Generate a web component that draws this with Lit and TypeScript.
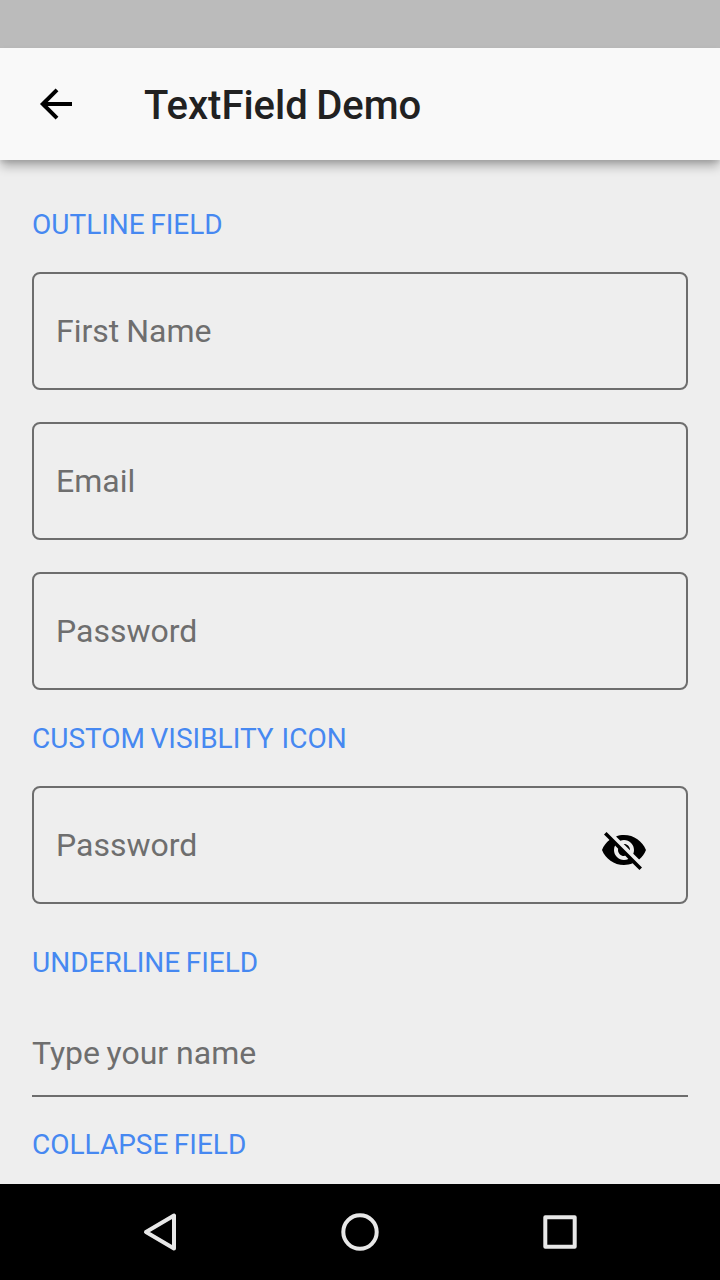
import { LitElement, html, css } from "lit";
import { customElement, property } from "lit/decorators.js";

@customElement("outline-field")
class OutlineField extends LitElement {
  @property() label = "";

  static styles = css`
    :host {
      display: flex;
      box-sizing: border-box;
      height: 118px;
      padding: 0 38px 0 22px;
      border: 2px solid #6d6d6d;
      border-radius: 8px;
      align-items: center;
      justify-content: space-between;
    }
    .label {
      font-size: 32px;
      line-height: 38px;
      color: #6e6e6e;
      white-space: pre;
      word-spacing: -1px;
    }
  `;

  render() {
    return html`<span class="label">${this.label}</span><slot></slot>`;
  }
}

@customElement("app-root")
class AppRoot extends LitElement {
  static styles = css`
    :host {
      display: flex;
      flex-direction: column;
      width: 720px;
      height: 1280px;
      overflow: hidden;
      background: #eeeeee;
      font-family: Roboto, sans-serif;
    }
    .status {
      flex: none;
      height: 48px;
      background: #bbbbbb;
    }
    .bar {
      position: relative;
      z-index: 1;
      flex: none;
      display: flex;
      align-items: center;
      height: 112px;
      padding-left: 32px;
      gap: 64px;
      background: #f9f9f9;
      box-shadow: 0 7px 10px -1px rgba(0, 0, 0, 0.3), 0 3px 3px rgba(0, 0, 0, 0.06);
    }
    .title {
      margin: 4px 0 0;
      font-size: 40px;
      line-height: 48px;
      font-weight: 500;
      color: #212121;
      white-space: pre;
      word-spacing: -1.5px;
    }
    .main {
      flex: 1;
      min-height: 0;
      display: flex;
      flex-direction: column;
      padding: 47px 32px 0;
      overflow: hidden;
    }
    .section {
      flex: none;
      font-size: 28px;
      line-height: 36px;
      color: #4688f1;
      white-space: pre;
      word-spacing: -1.5px;
      margin: 0;
      font-weight: 400;
    }
    .spread {
      word-spacing: 1px;
    }
    .group {
      flex: none;
      display: flex;
      flex-direction: column;
      gap: 32px;
      margin: 29px 0 31px;
    }
    .custom {
      margin-bottom: 41px;
    }
    .underline {
      flex: none;
      box-sizing: border-box;
      height: 116px;
      padding-top: 53px;
      border-bottom: 2px solid #6d6d6d;
      margin-bottom: 30px;
      font-size: 32px;
      line-height: 38px;
      color: #6e6e6e;
      white-space: pre;
    }
    .tight {
      word-spacing: -1.5px;
    }
    .eye {
      margin-top: 10px;
    }
    .nav {
      flex: none;
      display: flex;
      justify-content: center;
      align-items: center;
      gap: 152px;
      height: 96px;
      background: #000;
    }
    svg {
      display: block;
      flex: none;
    }
  `;

  render() {
    return html`
      <div class="status"></div>
      <header class="bar">
        <svg width="48" height="48" viewBox="0 0 48 48" fill="none" stroke="#000" stroke-width="4">
          <path d="M40 24H11M25 9.8 10.8 24 25 38.2" />
        </svg>
        <h1 class="title">TextField Demo</h1>
      </header>
      <main class="main">
        <h2 class="section">OUTLINE FIELD</h2>
        <div class="group">
          <outline-field label="First Name"></outline-field>
          <outline-field label="Email"></outline-field>
          <outline-field label="Password"></outline-field>
        </div>
        <h2 class="section">CUSTOM <span class="spread">VISIBLITY ICON</span></h2>
        <div class="group custom">
          <outline-field label="Password">
            <svg class="eye" width="48" height="48" viewBox="0 0 24 24">
              <path
                d="M12 7c2.76 0 5 2.24 5 5 0 .65-.13 1.26-.36 1.83l2.92 2.92c1.51-1.26 2.7-2.89 3.43-4.75-1.73-4.39-6-7.5-11-7.5-1.4 0-2.74.25-3.98.7l2.16 2.16C10.74 7.13 11.35 7 12 7zM2 4.27l2.28 2.28.46.46C3.08 8.3 1.78 10.02 1 12c1.73 4.39 6 7.5 11 7.5 1.55 0 3.03-.3 4.38-.84l.42.42L19.73 22 21 20.73 3.27 3 2 4.27zM7.53 9.8l1.55 1.55c-.05.21-.08.43-.08.65 0 1.66 1.34 3 3 3 .22 0 .44-.03.65-.08l1.55 1.55c-.67.33-1.41.53-2.2.53-2.76 0-5-2.24-5-5 0-.79.2-1.53.53-2.2zm4.31-.78 3.15 3.15.02-.16c0-1.66-1.34-3-3-3l-.17.01z"
              />
            </svg>
          </outline-field>
        </div>
        <h2 class="section">UNDERLINE FIELD</h2>
        <div class="underline"><span class="tight">Type your</span> name</div>
        <h2 class="section">COLLAPSE FIELD</h2>
      </main>
      <nav class="nav">
        <svg width="48" height="48" viewBox="0 0 48 48" fill="none" stroke="#e8e8e8" stroke-width="4" stroke-linejoin="round">
          <path d="M38 7.5V40.5L10 24Z" />
        </svg>
        <svg width="48" height="48" viewBox="0 0 48 48" fill="none" stroke="#e8e8e8" stroke-width="4">
          <circle cx="24" cy="24" r="16.7" />
        </svg>
        <svg width="48" height="48" viewBox="0 0 48 48" fill="none" stroke="#e8e8e8" stroke-width="4" stroke-linejoin="round">
          <rect x="9.3" y="9.3" width="29.4" height="29.4" />
        </svg>
      </nav>
    `;
  }
}
